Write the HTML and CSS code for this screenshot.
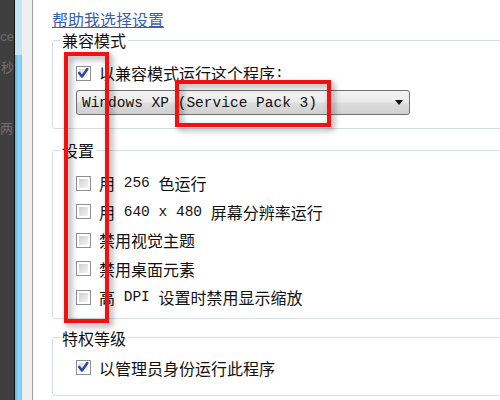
FILE: index.html
```html
<!DOCTYPE html>
<html lang="zh-CN">
<head>
  <meta charset="UTF-8">
  <title>兼容性</title>
  <link rel="stylesheet" href="styles.css">
</head>
<body>
  <div class="page">
    <div class="behind">
      <div class="ln ln1">Service</div>
      <div class="ln ln2">时间（秒</div>
      <div class="ln ln3 left">两者</div>
    </div>
    <div class="scroll"></div>
    <div class="gutter"></div>

    <div class="panel">
      <a class="help" href="#">帮助我选择设置</a>

      <fieldset class="grp g1">
        <legend>兼容模式</legend>
        <div class="rows">
          <label class="row first"><span class="cb on"><svg viewBox="0 0 9 9"><path d="M1 4.4 L3.6 7.6 L8.4 0.9"/></svg></span>以兼容模式运行这个程序<span class="m">:</span></label>
          <div class="select"><span class="m">Windows XP (Service Pack 3)</span><span class="arrow"></span></div>
        </div>
      </fieldset>

      <fieldset class="grp g2">
        <legend>设置</legend>
        <div class="rows">
          <label class="row first"><span class="cb"></span>用<span class="m"> 256 </span>色运行</label>
          <label class="row"><span class="cb"></span>用<span class="m"> 640 x 480 </span>屏幕分辨率运行</label>
          <label class="row"><span class="cb"></span>禁用视觉主题</label>
          <label class="row"><span class="cb"></span>禁用桌面元素</label>
          <label class="row"><span class="cb"></span>高<span class="m"> DPI </span>设置时禁用显示缩放</label>
        </div>
      </fieldset>

      <fieldset class="grp g3">
        <legend>特权等级</legend>
        <div class="rows">
          <label class="row first"><span class="cb on"><svg viewBox="0 0 9 9"><path d="M1 4.4 L3.6 7.6 L8.4 0.9"/></svg></span>以管理员身份运行此程序</label>
        </div>
      </fieldset>
    </div>

    <!-- red highlight boxes drawn over the dialog -->
    <div class="mark mark-v"></div>
    <div class="mark mark-h"></div>
  </div>
</body>
</html>
```

FILE: styles.css
```css
body { margin: 0; width: 500px; height: 400px; overflow: hidden; background: #fff; color: #111; font-family: "Noto Sans CJK SC", "Liberation Sans", sans-serif; font-size: 16px; }
.page { position: relative; display: flex; height: 400px; }

.behind { width: 14px; flex: none; background: #3e3e3e; border-right: 1px solid #121212; overflow: hidden; color: #6e6e6e; font-size: 13px; line-height: 14px; }
.ln { display: flex; justify-content: flex-end; white-space: nowrap; }
.ln.left { justify-content: flex-start; }
.ln1 { margin-top: 30px; font-family: "Liberation Sans", sans-serif; }
.ln2 { margin-top: 16px; }
.ln3 { margin-top: 47px; }

.scroll { width: 7px; flex: none; background: linear-gradient(#c3e5f6 0, #c3e5f6 55px, transparent 55px), linear-gradient(to right, #5bb9e8, #9ad7f4 60%, #74c5ee); }
.gutter { width: 10px; flex: none; background: #efefef; border-right: 1px solid #9c9c9c; }

.panel { flex: 1; min-width: 0; padding: 9px 0 0 19px; }
.help { display: block; width: max-content; line-height: 20px; color: #3a60ad; text-decoration: underline; }

.grp { width: 470px; min-width: 0; box-sizing: border-box; margin: 0; padding: 0 0 0 7px; border: 1px solid #d3dde5; border-radius: 3px; }
.grp legend { padding: 0 2px; line-height: 16px; }
.g1 { margin-top: 3px; padding-bottom: 13px; }
.g2 { margin-top: 13px; padding-bottom: 6px; }
.g3 { margin-top: 11px; padding-bottom: 13px; }

.rows { padding-left: 16px; }
.row { display: flex; align-items: center; height: 28.5px; white-space: nowrap; }
.g1 .row { height: 20px; margin-top: 15px; }
.g2 .row.first { margin-top: 11px; }
.g3 .row { height: 28px; margin-top: 8px; }

.m { font-family: "Liberation Mono", monospace; font-size: 14.5px; white-space: pre; }

.cb { width: 15px; height: 15px; flex: none; box-sizing: border-box; margin-right: 8px; padding: 2px; border: 1px solid #8e8f8f; background: linear-gradient(135deg, #cfcfcf, #f5f5f5) content-box, #fff; }
.cb.on { background: linear-gradient(135deg, #dadde6, #f7f8fb) content-box, #fff; }
.cb svg { display: block; width: 10px; height: 10px; margin: -1px 0 0 -1px; overflow: visible; }
.cb path { fill: none; stroke: #2f46a0; stroke-width: 2.2; stroke-linecap: round; stroke-linejoin: round; }

.select { display: flex; align-items: center; justify-content: space-between; width: 334px; height: 25px; box-sizing: border-box; margin-top: 7px; padding: 0 6px 0 5px; border: 1px solid #707070; border-radius: 3px; background: linear-gradient(#f3f3f3, #ebebeb 48%, #dddddd 52%, #d0d0d0); }
.arrow { width: 0; height: 0; border-left: 4px solid transparent; border-right: 4px solid transparent; border-top: 5px solid #111; }

.mark { position: absolute; box-sizing: border-box; border: 4px solid #f21010; filter: drop-shadow(3px 3px 3px rgba(0, 0, 0, 0.4)); }
.mark-v { left: 64px; top: 52px; width: 45px; height: 271px; }
.mark-h { left: 175px; top: 80px; width: 156px; height: 47px; }
```
